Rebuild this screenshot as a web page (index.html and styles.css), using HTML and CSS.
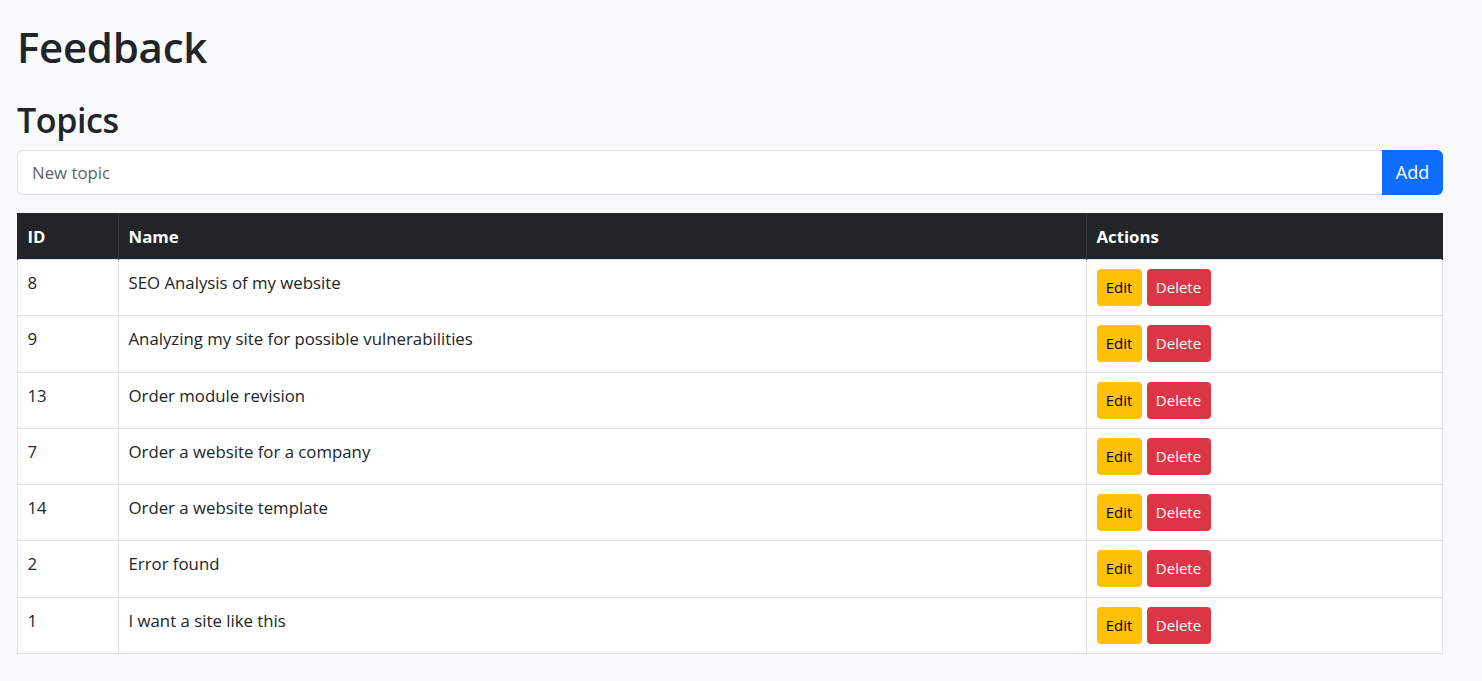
FILE: index.html
```html
<!DOCTYPE html>
<html lang="en">
<head>
    <meta charset="UTF-8">
    <meta name="viewport" content="width=device-width, initial-scale=1.0">
    <title>Feedback</title>
    <link rel="stylesheet" href="styles.css">
</head>
<body>
    <div class="page">
        <h1 class="page__title">Feedback</h1>
        <h2 class="page__subtitle">Topics</h2>

        <form class="topic-form">
            <input class="topic-form__input" type="text" placeholder="New topic">
            <button class="topic-form__btn" type="button">Add</button>
        </form>

        <table class="topics">
            <thead>
                <tr>
                    <th class="col-id">ID</th>
                    <th class="col-name">Name</th>
                    <th class="col-actions">Actions</th>
                </tr>
            </thead>
            <tbody>
                <tr>
                    <td>8</td>
                    <td>SEO Analysis of my website</td>
                    <td><div class="actions"><button class="btn btn--edit">Edit</button><button class="btn btn--delete">Delete</button></div></td>
                </tr>
                <tr>
                    <td>9</td>
                    <td>Analyzing my site for possible vulnerabilities</td>
                    <td><div class="actions"><button class="btn btn--edit">Edit</button><button class="btn btn--delete">Delete</button></div></td>
                </tr>
                <tr>
                    <td>13</td>
                    <td>Order module revision</td>
                    <td><div class="actions"><button class="btn btn--edit">Edit</button><button class="btn btn--delete">Delete</button></div></td>
                </tr>
                <tr>
                    <td>7</td>
                    <td>Order a website for a company</td>
                    <td><div class="actions"><button class="btn btn--edit">Edit</button><button class="btn btn--delete">Delete</button></div></td>
                </tr>
                <tr>
                    <td>14</td>
                    <td>Order a website template</td>
                    <td><div class="actions"><button class="btn btn--edit">Edit</button><button class="btn btn--delete">Delete</button></div></td>
                </tr>
                <tr>
                    <td>2</td>
                    <td>Error found</td>
                    <td><div class="actions"><button class="btn btn--edit">Edit</button><button class="btn btn--delete">Delete</button></div></td>
                </tr>
                <tr>
                    <td>1</td>
                    <td>I want a site like this</td>
                    <td><div class="actions"><button class="btn btn--edit">Edit</button><button class="btn btn--delete">Delete</button></div></td>
                </tr>
            </tbody>
        </table>
    </div>
</body>
</html>
```

FILE: styles.css
```css
* {
    margin: 0;
    padding: 0;
    box-sizing: border-box;
}

body {
    background-color: #f8f9fa;
    color: #212529;
    font-family: "Open Sans", "Noto Sans", Arial, sans-serif;
    font-size: 16.8px;
    line-height: 1.5;
}

.page {
    width: 1426px;
    margin-left: 17px;
    padding-top: 20px;
}

.page__title {
    font-size: 42px;
    font-weight: 600;
    line-height: 54px;
    letter-spacing: -0.3px;
}

.page__subtitle {
    margin-top: 25px;
    font-size: 34px;
    font-weight: 600;
    line-height: 43px;
    letter-spacing: -0.4px;
}

.topic-form {
    display: flex;
    margin-top: 8px;
}

.topic-form__input {
    flex: 1;
    height: 45px;
    padding: 0 14px;
    border: 1px solid #dee2e6;
    border-right: 0;
    border-radius: 6px 0 0 6px;
    background: #fff;
    font: inherit;
    color: #212529;
    outline: none;
}

.topic-form__input::placeholder {
    color: #5c636a;
}

.topic-form__btn {
    width: 61px;
    height: 45px;
    border: 0;
    border-radius: 0 6px 6px 0;
    background-color: #0d6efd;
    color: #fff;
    font: inherit;
    font-size: 18px;
}

.topics {
    width: 100%;
    margin-top: 18px;
    border-collapse: collapse;
    background: #fff;
}

.topics th,
.topics td {
    padding: 9px 10px 9.3px 9.5px;
    border: 1px solid #dee2e6;
    text-align: left;
    vertical-align: top;
    line-height: 27px;
}

.topics th {
    padding-bottom: 9px;
    background-color: #212529;
    border-color: #32383e;
    border-top-color: #212529;
    border-bottom: 0;
    color: #fff;
    font-weight: 700;
}

.topics th:first-child { border-left-color: #212529; }
.topics th:last-child { border-right-color: #212529; }

.col-id { width: 101px; }
.col-actions { width: 356px; }

.actions {
    display: flex;
    gap: 5px;
}

.btn {
    height: 37px;
    padding: 0 8px;
    border: 0;
    border-radius: 4px;
    font-family: inherit;
    font-size: 15px;
    line-height: 37px;
}

.btn--edit {
    width: 45px;
    background-color: #ffc107;
    color: #000;
}

.btn--delete {
    width: 64px;
    background-color: #dc3545;
    color: #fff;
}
```
